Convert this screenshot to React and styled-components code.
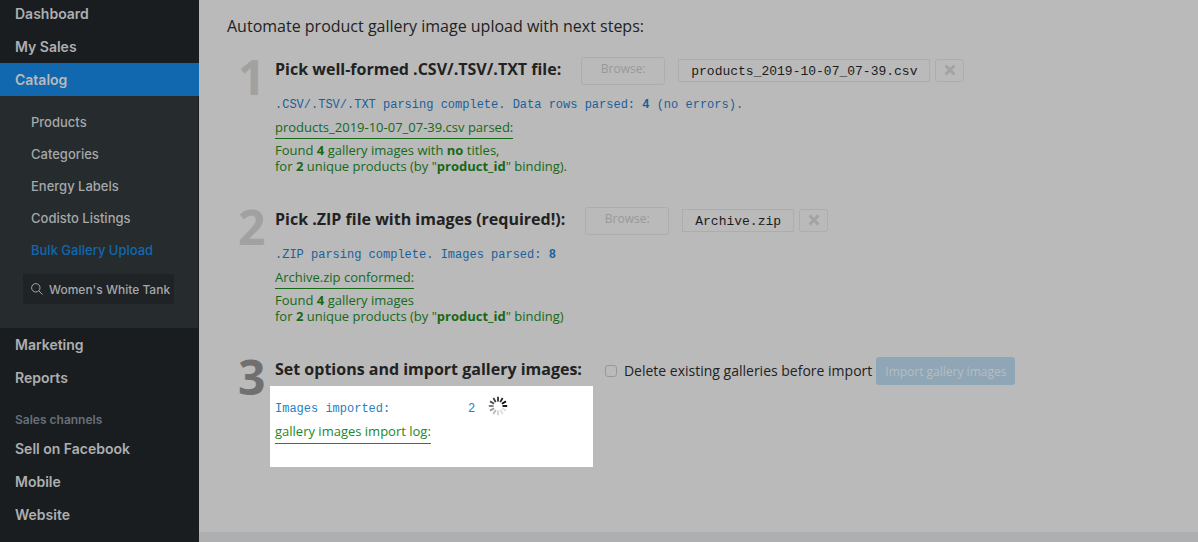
import React from 'react'
import styled, { createGlobalStyle } from 'styled-components'

const GlobalStyle = createGlobalStyle`
  * {
    box-sizing: border-box;
  }

  body {
    margin: 0;
    background: #bababa;
    color: #222;
    font-family: 'Open Sans', sans-serif;
    font-size: 13px;
  }
`

const Shell = styled.div`
  display: flex;
  min-height: 100vh;
  overflow: hidden;
`

const Sidebar = styled.nav`
  flex: none;
  width: 199px;
  margin-top: -3px;
  background: #191d20;
  font-family: Inter, sans-serif;
`

const NavLink = styled.a`
  display: block;
  padding: 0 15px;
  background: ${({ $active }) => ($active ? '#1168ae' : 'transparent')};
  color: ${({ $active }) => ($active ? '#bababa' : '#adafb0')};
  font-size: 14px;
  font-weight: 600;
  line-height: 33px;
  text-decoration: none;
`

const SubMenu = styled.div`
  padding: 10px 0 24px;
  border-right: 1px solid #191d20;
  background: #262b2e;
`

const SubLink = styled.a`
  display: block;
  padding: 0 31px;
  color: ${({ $active }) => ($active ? '#1168ae' : '#a5a8aa')};
  font-size: 13px;
  font-weight: 500;
  line-height: 32px;
  text-decoration: none;
  white-space: nowrap;
`

const SearchBox = styled.label`
  display: flex;
  align-items: center;
  gap: 6px;
  height: 30px;
  margin: 8px 24px 0 23px;
  padding: 0 2px 0 8px;
  background: #1f2326;
  color: #a5a8aa;
`

const SearchInput = styled.input`
  flex: 1;
  min-width: 0;
  padding: 0;
  border: 0;
  background: none;
  color: inherit;
  font: 500 12px Inter, sans-serif;
`

const NavLabel = styled.div`
  padding: 14px 15px 0;
  color: #66707a;
  font-size: 12px;
  font-weight: 600;
  line-height: 24px;
`

const Page = styled.div`
  display: flex;
  flex: 1;
  flex-direction: column;
  min-width: 0;
`

const Content = styled.main`
  flex: 1;
  padding: 14px 28px;
`

const Footer = styled.footer`
  height: 10px;
  background: #aeafb1;
`

const Intro = styled.p`
  margin: 0 0 19px;
  font-size: 16px;
  line-height: 24px;
`

const Steps = styled.ol`
  display: flex;
  flex-direction: column;
  gap: 33px;
  margin: 0;
  padding: 0;
  list-style: none;
`

const Step = styled.li`
  display: flex;
`

const StepNumber = styled.div`
  flex: none;
  width: 48px;
  padding-left: 11px;
  color: ${({ $current }) => ($current ? '#707070' : '#a1a1a1')};
  font-size: 48px;
  font-weight: 700;
  line-height: 40px;
`

const StepBody = styled.div`
  flex: 1;
  min-width: 0;
`

const StepHead = styled.div`
  display: flex;
  align-items: center;
  height: 28px;
  white-space: nowrap;
`

const StepTitle = styled.h2`
  margin: 0 20px 0 0;
  padding-bottom: 4px;
  font-size: 16px;
  font-weight: 700;
  line-height: 24px;
`

const BrowseButton = styled.button`
  width: 84px;
  height: 28px;
  margin-right: 13px;
  padding: 0 0 6px;
  border: 1px solid #adadad;
  border-radius: 3px;
  background: none;
  color: #999;
  font: 12px 'Open Sans', sans-serif;
`

const FileName = styled.code`
  height: 23px;
  margin: 0 5px 2px 0;
  padding: 0 12px;
  border: 1px solid #adadad;
  color: #1c1c1c;
  font: 13px/23px 'Liberation Mono', monospace;
`

const ClearButton = styled.button`
  display: flex;
  align-items: center;
  justify-content: center;
  width: 29px;
  height: 23px;
  margin-bottom: 2px;
  padding: 0;
  border: 1px solid #adadad;
  border-radius: 3px;
  background: none;
  color: #a3a3a3;
`

const Result = styled.div`
  padding-top: 12px;
  color: #166916;
  line-height: 16px;
`

const Status = styled.div`
  color: #19609a;
  font: 12px/16px 'Liberation Mono', monospace;
`

const LogLink = styled.a`
  display: inline-block;
  margin: 5px 0 3px;
  padding-bottom: 2px;
  border-bottom: 1px solid currentColor;
  color: inherit;
  line-height: 18px;
  text-decoration: none;
`

const Option = styled.label`
  display: flex;
  align-items: center;
  gap: 7px;
  margin: 0 4px 0 3px;
  padding-bottom: 2px;
  font-size: 14px;
`

const Checkbox = styled.input`
  width: 12px;
  height: 12px;
  margin: 2px 0 0;
  border: 1px solid #999;
  border-radius: 3px;
  appearance: none;
`

const ImportButton = styled.button`
  height: 28px;
  padding: 0 9px;
  border: 0;
  border-radius: 3px;
  background: #8fa6b7;
  color: #b8bdc1;
  font: 12px 'Open Sans', sans-serif;
`

const Progress = styled.div`
  width: 323px;
  height: 81px;
  margin: 1px 0 0 -5px;
  padding: 10px 5px;
  background: #fff;
  color: #228822;
`

const ProgressRow = styled.div`
  display: flex;
  align-items: flex-start;
  height: 22px;
  color: #2680c2;
  font: 12px/26px 'Liberation Mono', monospace;
`

const ProgressLabel = styled.span`
  width: 193px;
`

const ProgressCount = styled.span`
  width: 20px;
`

const ProgressLink = styled(LogLink)`
  margin: 4px 0 0;
  padding-bottom: 3px;
`

const SearchIcon = () => (
  <svg width="12" height="12" viewBox="0 0 12 12" fill="none" stroke="currentColor">
    <circle cx="4.8" cy="4.8" r="4.2" />
    <path d="M7.9 7.9 11.5 11.5" />
  </svg>
)

const CrossIcon = () => (
  <svg width="12" height="12" viewBox="0 0 12 12" stroke="currentColor" strokeWidth="3">
    <path d="M1.5 1.5 10.5 10.5M10.5 1.5 1.5 10.5" />
  </svg>
)

// spokes run counter-clockwise from three o'clock, darkest first
const spokes = [1, 0.95, 0.85, 0.82, 0.76, 0.7, 0.55, 0.4, 0.28, 0.18, 0.13, 0.12]

const Spinner = () => (
  <svg width="20" height="20" viewBox="-10 -10 20 20" stroke="#000" strokeWidth="1.8">
    {spokes.map((opacity, i) => (
      <path key={i} d="M4.5 0H9.2" opacity={opacity} transform={`rotate(${i * -30})`} />
    ))}
  </svg>
)

const FilePicker = ({ file }) => (
  <>
    <BrowseButton disabled>Browse:</BrowseButton>
    <FileName>{file}</FileName>
    <ClearButton disabled aria-label="Remove file"><CrossIcon /></ClearButton>
  </>
)

const SideNav = () => (
  <Sidebar>
    <NavLink href="#">Dashboard</NavLink>
    <NavLink href="#">My Sales</NavLink>
    <NavLink href="#" $active>Catalog</NavLink>
    <SubMenu>
      <SubLink href="#">Products</SubLink>
      <SubLink href="#">Categories</SubLink>
      <SubLink href="#">Energy Labels</SubLink>
      <SubLink href="#">Codisto Listings</SubLink>
      <SubLink href="#" $active>Bulk Gallery Upload</SubLink>
      <SearchBox>
        <SearchIcon />
        <SearchInput type="text" aria-label="Search" defaultValue="Women's White Tank" />
      </SearchBox>
    </SubMenu>
    <NavLink href="#">Marketing</NavLink>
    <NavLink href="#">Reports</NavLink>
    <NavLabel>Sales channels</NavLabel>
    <NavLink href="#">Sell on Facebook</NavLink>
    <NavLink href="#">Mobile</NavLink>
    <NavLink href="#">Website</NavLink>
  </Sidebar>
)

const App = () => (
  <>
    <GlobalStyle />
    <Shell>
      <SideNav />
      <Page>
        <Content>
          <Intro>Automate product gallery image upload with next steps:</Intro>
          <Steps>
            <Step>
              <StepNumber>1</StepNumber>
              <StepBody>
                <StepHead>
                  <StepTitle>Pick well-formed .CSV/.TSV/.TXT file:</StepTitle>
                  <FilePicker file="products_2019-10-07_07-39.csv" />
                </StepHead>
                <Result>
                  <Status>.CSV/.TSV/.TXT parsing complete. Data rows parsed: <b>4</b> (no errors).</Status>
                  <LogLink href="#">products_2019-10-07_07-39.csv parsed:</LogLink>
                  <div>Found <b>4</b> gallery images with <b>no</b> titles,</div>
                  <div>for <b>2</b> unique products (by "<b>product_id</b>" binding).</div>
                </Result>
              </StepBody>
            </Step>
            <Step>
              <StepNumber>2</StepNumber>
              <StepBody>
                <StepHead>
                  <StepTitle>Pick .ZIP file with images (required!):</StepTitle>
                  <FilePicker file="Archive.zip" />
                </StepHead>
                <Result>
                  <Status>.ZIP parsing complete. Images parsed: <b>8</b></Status>
                  <LogLink href="#">Archive.zip conformed:</LogLink>
                  <div>Found <b>4</b> gallery images</div>
                  <div>for <b>2</b> unique products (by "<b>product_id</b>" binding)</div>
                </Result>
              </StepBody>
            </Step>
            <Step>
              <StepNumber $current>3</StepNumber>
              <StepBody>
                <StepHead>
                  <StepTitle>Set options and import gallery images:</StepTitle>
                  <Option>
                    <Checkbox type="checkbox" />
                    Delete existing galleries before import
                  </Option>
                  <ImportButton disabled>Import gallery images</ImportButton>
                </StepHead>
                <Progress>
                  <ProgressRow>
                    <ProgressLabel>Images imported:</ProgressLabel>
                    <ProgressCount>2</ProgressCount>
                    <Spinner />
                  </ProgressRow>
                  <ProgressLink href="#">gallery images import log:</ProgressLink>
                </Progress>
              </StepBody>
            </Step>
          </Steps>
        </Content>
        <Footer />
      </Page>
    </Shell>
  </>
)

export default App
